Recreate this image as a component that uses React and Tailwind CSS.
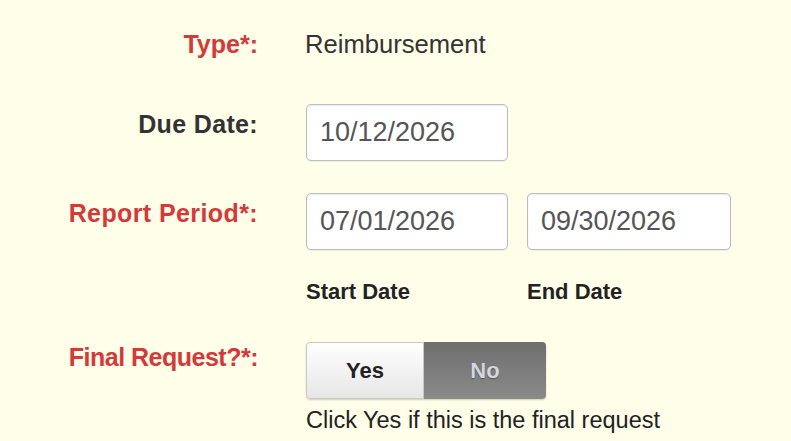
import React from "react";

const DateBox = ({ value, width = "w-[202px]" }) => (
  <div
    className={`${width} h-[57px] flex items-center pl-[13px] bg-white border border-[#b9bcc4] rounded-[5px] shadow-[inset_0_1px_2px_rgba(0,0,0,0.08),0_1px_1px_rgba(0,0,0,0.06)] text-[27px] text-[#555]`}
  >
    {value}
  </div>
);

const Label = ({ children, required, className = "" }) => (
  <div
    className={`w-[258px] shrink-0 text-right font-bold text-[25px] leading-[28px] ${
      required ? "text-[#d33a3a]" : "text-[#333]"
    } ${className}`}
  >
    {children}
  </div>
);

export default function App() {
  return (
    <div className="min-h-screen bg-[#fffee9] font-['Liberation_Sans',Arial,sans-serif] pt-[30px]">
      {/* Type */}
      <div className="flex">
        <Label required>Type*:</Label>
        <div className="ml-[47px] text-[25.6px] leading-[28px] text-[#333]">Reimbursement</div>
      </div>

      {/* Due date */}
      <div className="flex mt-[46px]">
        <Label className="pt-[6px] tracking-[0.35px]">Due Date:</Label>
        <div className="ml-[48px]">
          <DateBox value="10/12/2026" />
        </div>
      </div>

      {/* Report period */}
      <div className="flex mt-[32px]">
        <Label required className="pt-[6px] tracking-[0.4px]">Report Period*:</Label>
        <div className="ml-[48px]">
          <div className="flex gap-[19px]">
            <DateBox value="07/01/2026" />
            <DateBox value="09/30/2026" width="w-[204px]" />
          </div>
          <div className="flex mt-[28px] text-[22px] leading-[28px] font-bold text-[#222]">
            <div className="w-[221px]">Start Date</div>
            <div>End Date</div>
          </div>
        </div>
      </div>

      {/* Final request */}
      <div className="flex mt-[36px]">
        <Label required className="pt-[1px] tracking-[-0.5px]">Final Request?*:</Label>
        <div className="ml-[48px]">
          <div className="flex h-[57px] w-[240px] rounded-[4px] shadow-[0_1px_2px_rgba(0,0,0,0.2)]">
            <button className="w-[118px] h-full rounded-l-[4px] border border-[#c8c8c8] bg-gradient-to-b from-[#ffffff] to-[#e6e6e6] text-[22px] font-bold text-[#222]">
              Yes
            </button>
            <button className="flex-1 h-full rounded-r-[4px] bg-gradient-to-b from-[#6f6f6f] to-[#8a8a8a] text-[22px] font-bold text-[#d4d6de] [text-shadow:0_1px_1px_rgba(0,0,0,0.35)]">
              No
            </button>
          </div>
          <div className="mt-[7px] text-[23.5px] leading-[28px] text-[#222]">
            Click Yes if this is the final request
          </div>
        </div>
      </div>
    </div>
  );
}
